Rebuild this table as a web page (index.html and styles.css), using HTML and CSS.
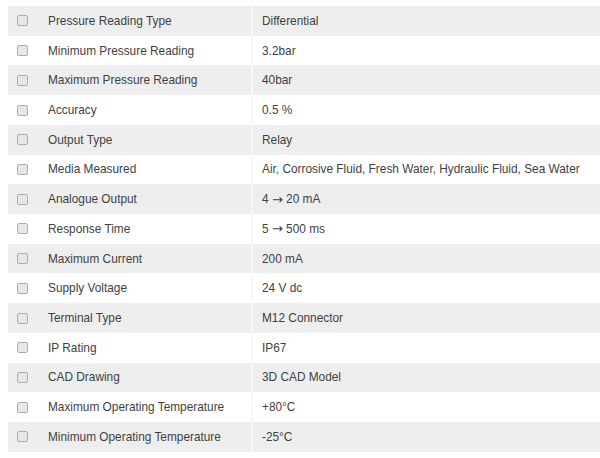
FILE: index.html
```html
<!DOCTYPE html>
<html>
<head>
<meta charset="utf-8">
<link rel="stylesheet" href="styles.css">
</head>
<body>
<div class="specs">
  <div class="row"><span class="check"></span><span class="label">Pressure Reading Type</span><span class="value">Differential</span></div>
  <div class="row"><span class="check"></span><span class="label">Minimum Pressure Reading</span><span class="value">3.2bar</span></div>
  <div class="row"><span class="check"></span><span class="label">Maximum Pressure Reading</span><span class="value">40bar</span></div>
  <div class="row"><span class="check"></span><span class="label">Accuracy</span><span class="value">0.5 %</span></div>
  <div class="row"><span class="check"></span><span class="label">Output Type</span><span class="value">Relay</span></div>
  <div class="row"><span class="check"></span><span class="label">Media Measured</span><span class="value">Air, Corrosive Fluid, Fresh Water, Hydraulic Fluid, Sea Water</span></div>
  <div class="row"><span class="check"></span><span class="label">Analogue Output</span><span class="value">4&nbsp;<span class="arrow">→</span>&nbsp;20 mA</span></div>
  <div class="row"><span class="check"></span><span class="label">Response Time</span><span class="value">5&nbsp;<span class="arrow">→</span>&nbsp;500 ms</span></div>
  <div class="row"><span class="check"></span><span class="label">Maximum Current</span><span class="value">200 mA</span></div>
  <div class="row"><span class="check"></span><span class="label">Supply Voltage</span><span class="value">24 V dc</span></div>
  <div class="row"><span class="check"></span><span class="label">Terminal Type</span><span class="value">M12 Connector</span></div>
  <div class="row"><span class="check"></span><span class="label">IP Rating</span><span class="value">IP67</span></div>
  <div class="row"><span class="check"></span><span class="label">CAD Drawing</span><span class="value">3D CAD Model</span></div>
  <div class="row"><span class="check"></span><span class="label">Maximum Operating Temperature</span><span class="value">+80°C</span></div>
  <div class="row"><span class="check"></span><span class="label">Minimum Operating Temperature</span><span class="value">-25°C</span></div>
</div>
</body>
</html>
```

FILE: styles.css
```css
html, body {
  margin: 0;
  padding: 0;
  background: #ffffff;
}
body {
  font-family: "Liberation Sans", Arial, sans-serif;
  font-size: 11.85px;
  color: #3f3f3f;
}
.specs {
  padding: 6px 0 0 8px;
  display: flex;
  flex-direction: column;
}
.row {
  display: grid;
  grid-template-columns: 40px 203px 1fr;
  align-items: center;
  height: 29.73px;
  white-space: nowrap;
}
.row:nth-child(odd) {
  background: #eeeeee;
}
.check {
  justify-self: start;
  margin-left: 9px;
  width: 9px;
  height: 9px;
  border: 1px solid #adadad;
  border-radius: 2px;
  background: #e7e7e7;
}
.label {
  align-self: stretch;
  display: flex;
  align-items: center;
}
.value {
  align-self: stretch;
  display: flex;
  align-items: center;
  padding-left: 9px;
  border-left: 2px solid #f7f7f7;
}
.arrow {
  font-family: "DejaVu Sans", sans-serif;
  font-size: 13px;
}
```
